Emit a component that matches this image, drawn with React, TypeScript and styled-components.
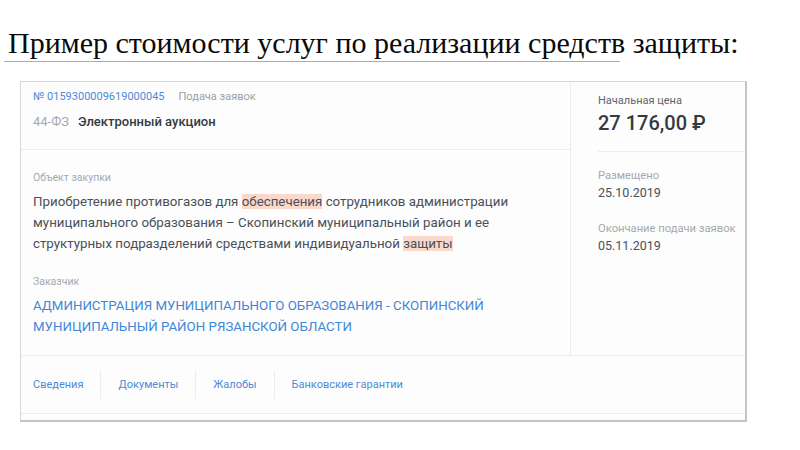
import * as React from 'react';
import styled, { createGlobalStyle } from 'styled-components';

var GlobalStyle = createGlobalStyle`
	*, *::before, *::after {
		box-sizing: border-box;
	}

	html, body {
		margin: 0;
		padding: 0;
		background: #ffffff;
	}
`;

var tabs = ['Сведения', 'Документы', 'Жалобы', 'Банковские гарантии'];

function App() {
	return (
		<>
			<GlobalStyle />
			<Page>
				<Title>Пример стоимости услуг по реализации средств защиты:</Title>
				<TitleRule />
				<Card>
					<Main>
						<LeftColumn>
							<Header>
								<MetaRow>
									<Number>№ 0159300009619000045</Number>
									<Stage>Подача заявок</Stage>
								</MetaRow>
								<TypeRow>
									<Law>44-ФЗ</Law>
									<Kind>Электронный аукцион</Kind>
								</TypeRow>
							</Header>
							<Body>
								<Label>Объект закупки</Label>
								<Description>
									Приобретение противогазов для <Mark>обеспечения</Mark> сотрудников администрации
									<br />
									муниципального образования – Скопинский муниципальный район и ее
									<br />
									структурных подразделений средствами индивидуальной <Mark>защиты</Mark>
								</Description>
								<Label $gap>Заказчик</Label>
								<Customer>
									АДМИНИСТРАЦИЯ МУНИЦИПАЛЬНОГО ОБРАЗОВАНИЯ - СКОПИНСКИЙ
									<br />
									МУНИЦИПАЛЬНЫЙ РАЙОН РЯЗАНСКОЙ ОБЛАСТИ
								</Customer>
							</Body>
						</LeftColumn>
						<RightColumn>
							<PriceBlock>
								<PriceLabel>Начальная цена</PriceLabel>
								<Price>27 176,00 ₽</Price>
							</PriceBlock>
							<DateBlock>
								<DateLabel>Размещено</DateLabel>
								<DateValue>25.10.2019</DateValue>
								<DateLabel $gap>Окончание подачи заявок</DateLabel>
								<DateValue>05.11.2019</DateValue>
							</DateBlock>
						</RightColumn>
					</Main>
					<Tabs>
						{tabs.map((t) => (
							<Tab key={t}>{t}</Tab>
						))}
					</Tabs>
				</Card>
			</Page>
		</>
	);
}

export default App;

var Page = styled.div`
	width: 800px;
	height: 450px;
	padding-top: 26px;
`;

var Title = styled.h1`
	margin: 0 0 0 8px;
	font-family: 'Liberation Serif', 'Times New Roman', serif;
	font-weight: normal;
	font-size: 30px;
	line-height: 34px;
	color: #0a0a0a;
`;

var TitleRule = styled.div`
	margin: 1px 0 0 4px;
	width: 616px;
	height: 1px;
	background: #e39494;
`;

var Card = styled.div`
	margin: 19px 0 0 20px;
	width: 727px;
	height: 341px;
	background: #fdfdfd;
	border: 1px solid #d6d6d6;
	border-right: 2px solid #c4c4c4;
	border-bottom: 2px solid #c4c4c4;
	display: flex;
	flex-direction: column;
	font-family: Roboto, 'Noto Sans', sans-serif;
`;

var Main = styled.div`
	display: flex;
	height: 274px;
	border-bottom: 1px solid #ececec;
`;

var LeftColumn = styled.div`
	width: 550px;
	display: flex;
	flex-direction: column;
	border-right: 1px solid #ececec;
`;

var Header = styled.div`
	height: 68px;
	padding: 7px 0 0 12px;
	border-bottom: 1px solid #ececec;
`;

var MetaRow = styled.div`
	display: flex;
	gap: 14px;
	font-size: 11px;
	line-height: 16px;
`;

var Number = styled.span`
	color: #4f8ad6;
`;

var Stage = styled.span`
	color: #9aa1aa;
`;

var TypeRow = styled.div`
	display: flex;
	gap: 9px;
	margin-top: 8px;
	font-size: 13px;
	line-height: 18px;
`;

var Law = styled.span`
	color: #a3a9b1;
`;

var Kind = styled.span`
	color: #333a42;
	font-weight: 500;
`;

var Body = styled.div`
	padding: 21px 0 0 12px;
`;

var Label = styled.div<{ $gap?: boolean }>`
	font-size: 10.5px;
	line-height: 14px;
	color: #a3a9b1;
	margin-top: ${(p) => (p.$gap ? '21px' : '0')};
`;

var Description = styled.div`
	margin-top: 6px;
	font-size: 13.3px;
	line-height: 21px;
	color: #4a5059;
`;

var Mark = styled.span`
	background: #fad8cc;
`;

var Customer = styled.div`
	margin-top: 6px;
	font-size: 13.3px;
	line-height: 21px;
	color: #3f86d6;
`;

var RightColumn = styled.div`
	flex: 1;
	display: flex;
	flex-direction: column;
	padding-left: 27px;
`;

var PriceBlock = styled.div`
	height: 70px;
	padding-top: 12px;
	border-bottom: 1px solid #ececec;
`;

var PriceLabel = styled.div`
	font-size: 11px;
	line-height: 14px;
	color: #5d646c;
`;

var Price = styled.div`
	margin-top: 3px;
	font-size: 20px;
	line-height: 24px;
	font-weight: 500;
	color: #333a42;
`;

var DateBlock = styled.div`
	padding-top: 17px;
`;

var DateLabel = styled.div<{ $gap?: boolean }>`
	font-size: 11.2px;
	line-height: 14px;
	color: #a3a9b1;
	margin-top: ${(p) => (p.$gap ? '21px' : '0')};
`;

var DateValue = styled.div`
	margin-top: 2px;
	font-size: 12.5px;
	line-height: 16px;
	color: #4a5059;
`;

var Tabs = styled.div`
	display: flex;
	align-items: center;
	height: 58px;
	padding-left: 12px;
	border-bottom: 1px solid #ececec;
`;

var Tab = styled.span`
	font-size: 11px;
	line-height: 28px;
	color: #4f8ad6;
	padding: 0 17px;
	border-left: 1px solid #ececec;

	&:first-child {
		padding-left: 0;
		border-left: none;
	}
`;
